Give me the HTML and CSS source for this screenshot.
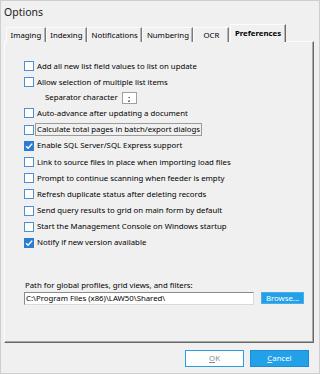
FILE: index.html
```html
<!DOCTYPE html>
<html>
<head>
<meta charset="utf-8">
<title>Options</title>
<link rel="stylesheet" href="styles.css">
</head>
<body>
<div class="window">
  <div class="title">Options</div>
  <div class="tabs">
    <div class="tab">Imaging</div>
    <div class="tab">Indexing</div>
    <div class="tab">Notifications</div>
    <div class="tab">Numbering</div>
    <div class="tab">OCR</div>
    <div class="tab selected">Preferences</div>
  </div>
  <div class="panel">
    <div class="row"><span class="cb"></span><span class="label">Add all new list field values to list on update</span></div>
    <div class="row"><span class="cb"></span><span class="label">Allow selection of multiple list items</span></div>
    <div class="sep-row"><span class="label">Separator character</span><span class="sep-box">;</span></div>
    <div class="row"><span class="cb"></span><span class="label">Auto-advance after updating a document</span></div>
    <div class="row"><span class="cb"></span><span class="label focus">Calculate total pages in batch/export dialogs</span></div>
    <div class="row"><span class="cb checked"><svg viewBox="0 0 10 10" width="10" height="10"><path d="M2 5.2 L4.1 7.2 L8.2 2.6" fill="none" stroke="#fff" stroke-width="1.4"/></svg></span><span class="label">Enable SQL Server/SQL Express support</span></div>
    <div class="row"><span class="cb"></span><span class="label">Link to source files in place when importing load files</span></div>
    <div class="row"><span class="cb"></span><span class="label">Prompt to continue scanning when feeder is empty</span></div>
    <div class="row"><span class="cb"></span><span class="label">Refresh duplicate status after deleting records</span></div>
    <div class="row"><span class="cb"></span><span class="label">Send query results to grid on main form by default</span></div>
    <div class="row"><span class="cb"></span><span class="label">Start the Management Console on Windows startup</span></div>
    <div class="row"><span class="cb checked"><svg viewBox="0 0 10 10" width="10" height="10"><path d="M2 5.2 L4.1 7.2 L8.2 2.6" fill="none" stroke="#fff" stroke-width="1.4"/></svg></span><span class="label">Notify if new version available</span></div>
    <div class="path-label">Path for global profiles, grid views, and filters:</div>
    <div class="path-row">
      <div class="path-input">C:\Program Files (x86)\LAW50\Shared\</div>
      <div class="btn blue browse">Browse...</div>
    </div>
  </div>
  <div class="footer">
    <div class="btn ok"><u>O</u>K</div>
    <div class="btn blue"><u>C</u>ancel</div>
  </div>
</div>
</body>
</html>
```
FILE: styles.css
```css
* { box-sizing: border-box; }
html, body { margin: 0; padding: 0; }
body {
  width: 320px;
  height: 374px;
  overflow: hidden;
  background: #f0f0f0;
  font-family: "Noto Sans", "Open Sans", sans-serif;
  font-size: 7.8px;
  color: #000;
}
.window {
  width: 320px;
  height: 374px;
  border: 1px solid #cfcfcf;
  background: #f0f0f0;
  display: flex;
  flex-direction: column;
}
.title {
  height: 22px;
  line-height: 22px;
  padding-left: 3px;
  font-size: 10.5px;
  color: #1a1a1a;
}
.tabs {
  display: flex;
  align-items: flex-end;
  height: 19px;
  margin-left: 5px;
  margin-bottom: -1px;
  position: relative;
  z-index: 1;
}
.tab {
  height: 15px;
  line-height: 14px;
  min-width: 36px;
  padding: 0 3.5px;
  text-align: center;
  border-top: 1px solid #fcfcfc;
  border-left: 1px solid #fcfcfc;
  border-right: 1px solid #7a7a7a;
  box-shadow: inset -1px 0 0 #b5b5b5;
  background: #f0f0f0;
  white-space: nowrap;
}
.tab.selected {
  height: 18px;
  line-height: 16px;
  font-weight: bold;
  margin-left: 1px;
  border-right: 1px solid #6a6a6a;
}
.panel {
  height: 302px;
  margin: 0 5px 0 3px;
  border-top: 1px solid #fcfcfc;
  border-left: 1px solid #fcfcfc;
  border-right: 1px solid #6a6a6a;
  border-bottom: 1px solid #6a6a6a;
  box-shadow: inset -1px -1px 0 #a8a8a8;
  padding: 16px 9px 0 19px;
  display: flex;
  flex-direction: column;
}
.row {
  height: 16.2px;
  display: flex;
  align-items: center;
  white-space: nowrap;
}
.cb {
  width: 10px;
  height: 10px;
  flex: none;
  border: 1px solid #4d8fd0;
  background: #fff;
  margin-right: 1px;
  display: flex;
}
.cb.checked {
  border-color: #2a7dd3;
  background: #2a7dd3;
}
.cb.checked svg { margin: -1px; }
.label {
  padding: 0 1px;
  line-height: 11px;
  border: 1px solid transparent;
}
.label.focus { border-color: #9a9a9a; }
.sep-row {
  height: 15px;
  display: flex;
  align-items: center;
  padding-left: 19px;
  white-space: nowrap;
}
.sep-box {
  width: 15px;
  height: 12px;
  margin-left: 2px;
  background: #fff;
  border: 1px solid #a0a0a0;
  text-align: center;
  line-height: 10px;
  font-weight: bold;
}
.path-label {
  margin-top: 28px;
  height: 12px;
  line-height: 12px;
  padding-left: 1px;
}
.path-row {
  display: flex;
  align-items: flex-start;
  margin-top: 1px;
}
.path-input {
  width: 230px;
  height: 13px;
  line-height: 11px;
  background: #fff;
  border: 1px solid #8a8a8a;
  border-right-color: #d9d9d9;
  border-bottom-color: #d9d9d9;
  padding-left: 1px;
  white-space: nowrap;
}
.btn {
  height: 17px;
  width: 59px;
  text-align: center;
  line-height: 15px;
  border: 1px solid #1f8ad6;
}
.btn.blue {
  background: #22a0e8;
  color: #fff;
}
.browse {
  margin-left: 7px;
  width: 43px;
  height: 12px;
  line-height: 10px;
  border-color: #4aaee8;
}
.footer {
  display: flex;
  justify-content: flex-end;
  gap: 6px;
  margin-top: 7px;
  padding-right: 10px;
}
.btn.ok {
  background: #fff;
  color: #7f8d99;
  border-color: #2a9de6;
}
u { text-decoration-thickness: 1px; }
```
